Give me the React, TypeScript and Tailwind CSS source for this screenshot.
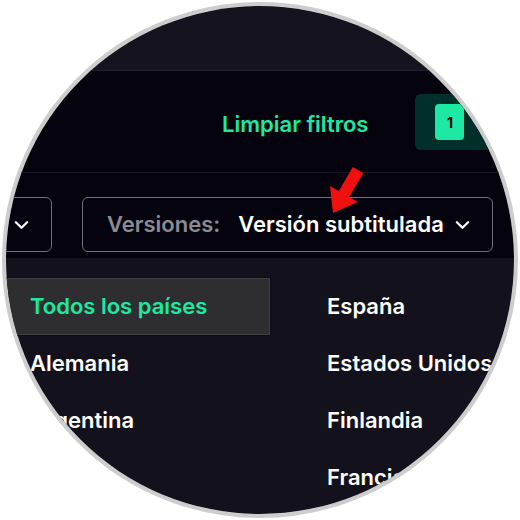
import React from "react";

function Chevron({ className }: { className?: string }) {
  return (
    <svg viewBox="0 0 16 10" className={className} fill="none" stroke="currentColor" strokeWidth="2.4" strokeLinecap="round" strokeLinejoin="round">
      <path d="M2 2 L8 8 L14 2" />
    </svg>
  );
}

export default function App() {
  const left = ["Todos los países", "Alemania", "Argentina", ""];
  const right = ["España", "Estados Unidos", "Finlandia", "Francia"];
  return (
    <div className="relative w-[520px] h-[520px] bg-white overflow-hidden" style={{ fontFamily: "Inter, 'Noto Sans', sans-serif" }}>
      <div className="ml-[2px] mt-[2px] w-[516px] h-[516px] rounded-full border-[4px] border-[#cdcdcd] overflow-hidden">
        <div className="ml-[-6px] mt-[-6px] w-[520px] h-[520px] flex flex-col">
          <div className="h-[71px] shrink-0 bg-[#15131e] border-b border-[#221f2e]" />
          <div className="h-[102px] shrink-0 bg-[#05040e] border-b border-[#181722] flex items-start pt-[23px] pl-[222px] gap-[47px]">
            <span className="mt-[18px] text-[22px] leading-[24px] font-semibold text-[#1de9a2] whitespace-nowrap">Limpiar filtros</span>
            <div className="w-[96px] h-[56px] shrink-0 rounded-[6px] bg-[#01302a] flex items-center pl-[20px]">
              <div className="w-[29px] h-[36px] rounded-[4px] bg-[#1de9a2] flex items-center justify-center text-[14px] font-bold text-black">1</div>
            </div>
          </div>
          <div className="h-[85px] shrink-0 bg-[#05040e] flex items-start pt-[24px] gap-[30px]">
            <div className="ml-[-30px] w-[82px] h-[55px] shrink-0 rounded-[6px] border-[1.5px] border-[#707078] flex items-center justify-end pr-[22px] text-white">
              <Chevron className="w-[15px] h-[10px]" />
            </div>
            <div className="w-[411px] h-[55px] shrink-0 rounded-[6px] border-[1.5px] border-[#707078] flex items-center pl-[24px] pr-[22px]">
              <span className="text-[22px] font-semibold text-[#8b8b93] whitespace-nowrap">Versiones:</span>
              <span className="ml-[18px] text-[22px] font-semibold text-white whitespace-nowrap">Versión subtitulada</span>
              <Chevron className="ml-auto w-[15px] h-[10px] text-white" />
            </div>
          </div>
          <div className="flex-1 bg-[#13121c] pt-[19px] grid grid-cols-[327px_1fr] auto-rows-[57px]">
            {left.map((l, i) => (
              <React.Fragment key={i}>
                <div className="flex items-center pt-[2px]">
                  {i === 0 ? (
                    <div className="ml-[-10px] w-[280px] h-[57px] bg-[#2e2e30] border border-[#404042] shadow-[0_0_0_1px_#0b0a1a] flex items-center pl-[39px] text-[22px] font-semibold text-[#1de9a2] whitespace-nowrap">
                      {l}
                    </div>
                  ) : (
                    <span className="pl-[30px] text-[22px] font-semibold text-white whitespace-nowrap">{l}</span>
                  )}
                </div>
                <div className="flex items-center pt-[2px]">
                  <span className="text-[22px] font-semibold text-white whitespace-nowrap">{right[i]}</span>
                </div>
              </React.Fragment>
            ))}
          </div>
        </div>
      </div>
      <svg className="absolute left-0 top-0 pointer-events-none" width="520" height="520" viewBox="0 0 520 520">
        <polygon
          points="333,213 330,186 338.8,191 352.8,167 363.2,173 349.2,197 357.8,202"
          fill="#f01010"
        />
      </svg>
    </div>
  );
}
